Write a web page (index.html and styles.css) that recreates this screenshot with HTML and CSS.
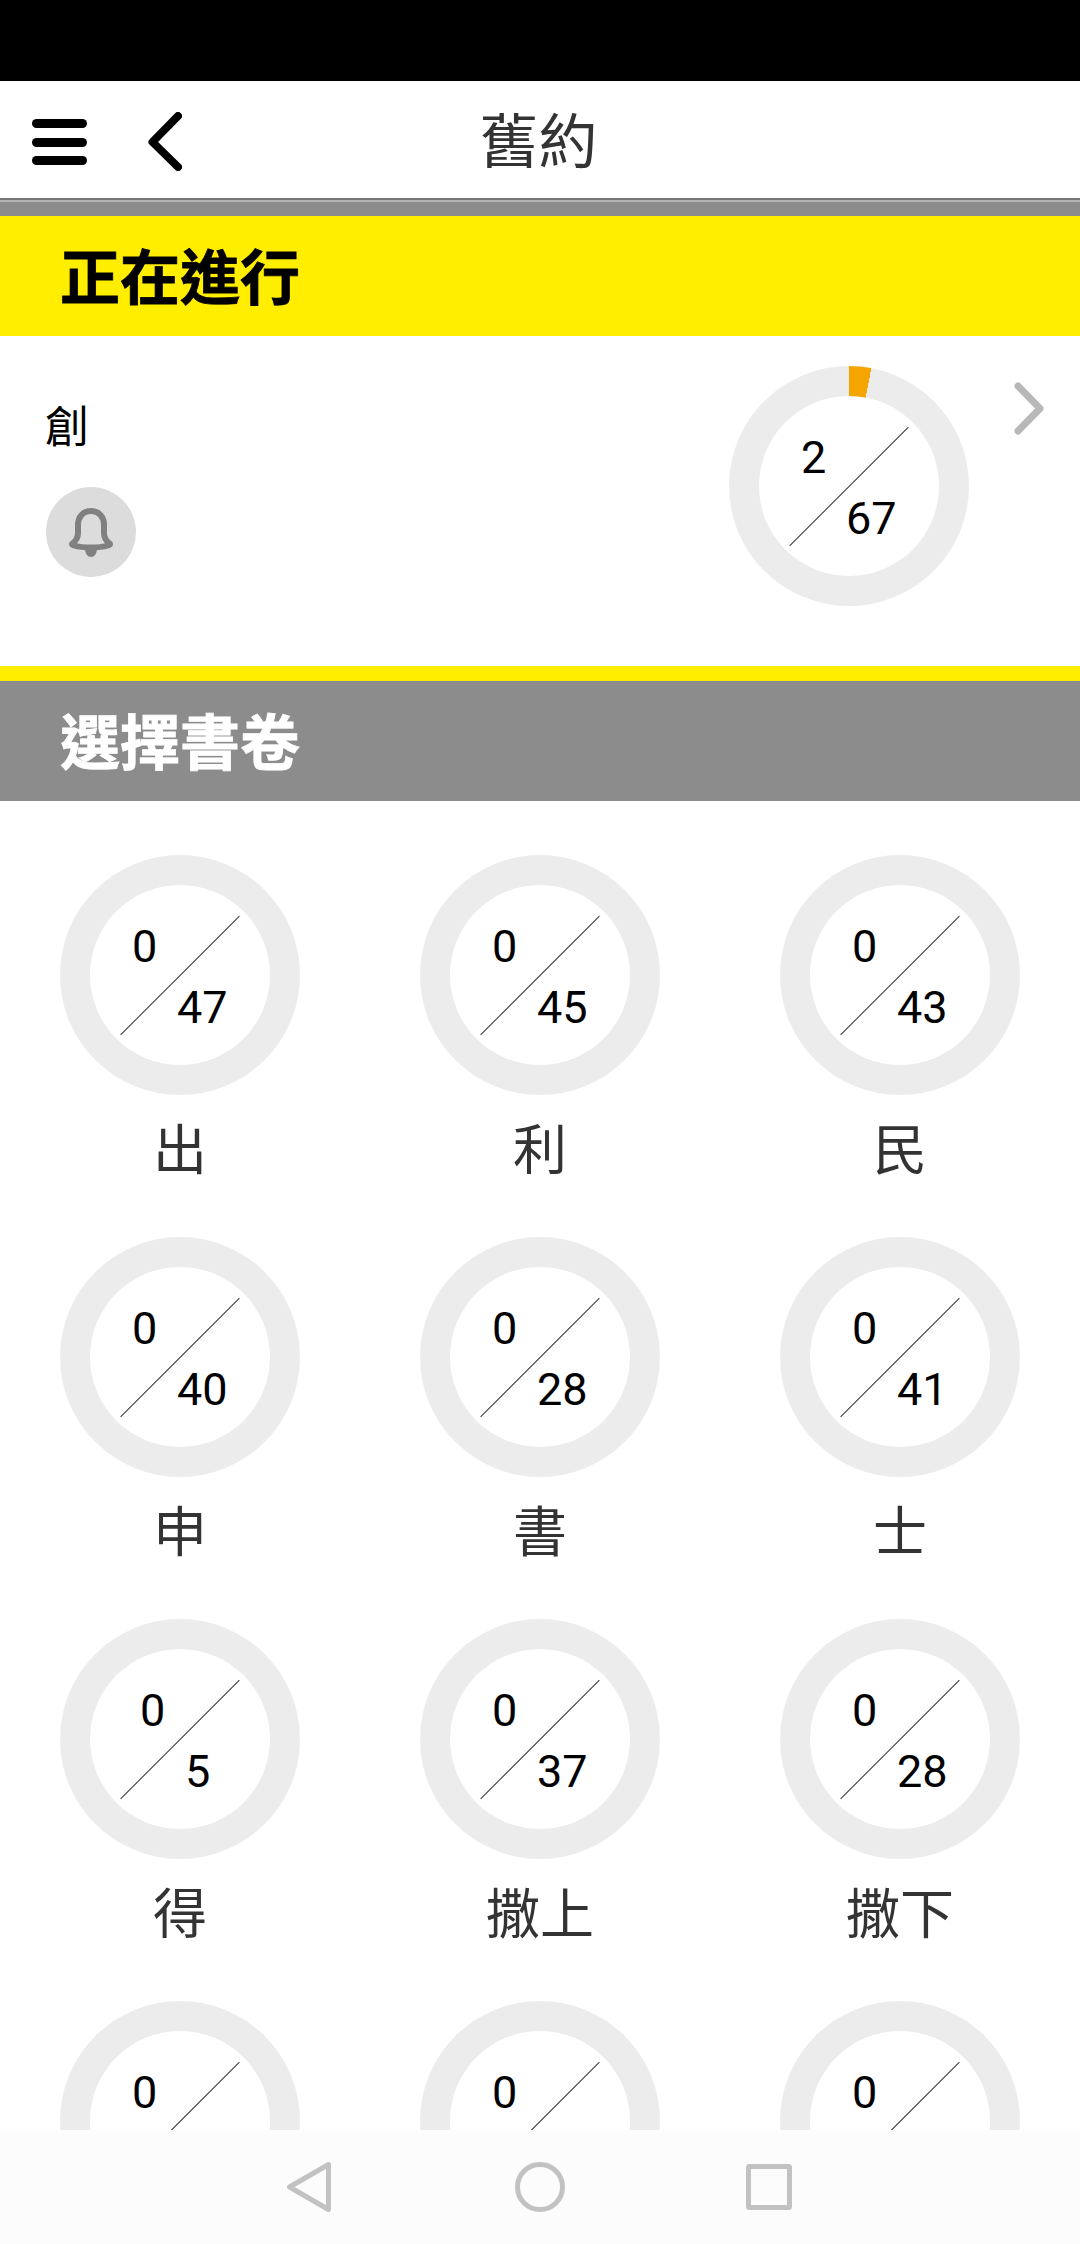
FILE: index.html
```html
<!DOCTYPE html>
<html lang="zh-Hant">
<head>
    <meta charset="UTF-8">
    <meta name="viewport" content="width=device-width, initial-scale=1.0">
    <title>舊約</title>
    <link rel="stylesheet" href="styles.css">
</head>
<body>
    <div class="status-bar"></div>

    <header class="app-bar">
        <div class="app-bar-left">
            <svg class="icon-menu" width="55" height="46" viewBox="0 0 55 46">
                <rect y="0" width="55" height="9" rx="4.5"/>
                <rect y="19" width="55" height="9" rx="4.5"/>
                <rect y="37" width="55" height="9" rx="4.5"/>
            </svg>
            <svg class="icon-back" width="34" height="59" viewBox="0 0 34 59">
                <polyline points="30,4 4.5,30 30,55"/>
            </svg>
        </div>
        <h1 class="app-title">舊約</h1>
    </header>
    <div class="app-bar-shadow"></div>

    <h2 class="section-head section-yellow">正在進行</h2>

    <section class="current">
        <div class="current-info">
            <p class="current-name">創</p>
            <div class="bell">
                <svg width="44" height="49" viewBox="0 0 44 49">
                    <path class="bell-body" d="M22 3C14 3 9 9 9 17v8c0 5-2 8-6 11 0 1 1 1 2 1.5 5 1.5 11 2 17 2s12-.5 17-2c1-.5 2-.5 2-1.5-4-3-6-6-6-11v-8c0-8-5-14-13-14z"/>
                    <path class="bell-clapper" d="M16 41h12a6 8 0 0 1-12 0z"/>
                </svg>
            </div>
        </div>
        <div class="ring" style="--p: 10.7deg">
            <div class="ring-inner">
                <div class="frac"><span class="num">2</span><span class="den">67</span></div>
            </div>
        </div>
        <svg class="icon-next" width="30" height="53" viewBox="0 0 30 53">
            <polyline points="4,4 26,26.5 4,49"/>
        </svg>
    </section>

    <div class="band"></div>
    <h2 class="section-head section-gray">選擇書卷</h2>

    <main class="books">
        <div class="book">
            <div class="ring"><div class="ring-inner"><div class="frac"><span class="num">0</span><span class="den">47</span></div></div></div>
            <p class="book-name">出</p>
        </div>
        <div class="book">
            <div class="ring"><div class="ring-inner"><div class="frac"><span class="num">0</span><span class="den">45</span></div></div></div>
            <p class="book-name">利</p>
        </div>
        <div class="book">
            <div class="ring"><div class="ring-inner"><div class="frac"><span class="num">0</span><span class="den">43</span></div></div></div>
            <p class="book-name">民</p>
        </div>
        <div class="book">
            <div class="ring"><div class="ring-inner"><div class="frac"><span class="num">0</span><span class="den">40</span></div></div></div>
            <p class="book-name">申</p>
        </div>
        <div class="book">
            <div class="ring"><div class="ring-inner"><div class="frac"><span class="num">0</span><span class="den">28</span></div></div></div>
            <p class="book-name">書</p>
        </div>
        <div class="book">
            <div class="ring"><div class="ring-inner"><div class="frac"><span class="num">0</span><span class="den">41</span></div></div></div>
            <p class="book-name">士</p>
        </div>
        <div class="book">
            <div class="ring"><div class="ring-inner"><div class="frac frac-short"><span class="num">0</span><span class="den">5</span></div></div></div>
            <p class="book-name">得</p>
        </div>
        <div class="book">
            <div class="ring"><div class="ring-inner"><div class="frac"><span class="num">0</span><span class="den">37</span></div></div></div>
            <p class="book-name">撒上</p>
        </div>
        <div class="book">
            <div class="ring"><div class="ring-inner"><div class="frac"><span class="num">0</span><span class="den">28</span></div></div></div>
            <p class="book-name">撒下</p>
        </div>
        <!-- last row runs under the nav bar, only the top of the rings shows -->
        <div class="book">
            <div class="ring"><div class="ring-inner"><div class="frac"><span class="num">0</span></div></div></div>
        </div>
        <div class="book">
            <div class="ring"><div class="ring-inner"><div class="frac"><span class="num">0</span></div></div></div>
        </div>
        <div class="book">
            <div class="ring"><div class="ring-inner"><div class="frac"><span class="num">0</span></div></div></div>
        </div>
    </main>

    <nav class="nav-bar">
        <svg width="50" height="50" viewBox="0 0 50 50">
            <path d="M43.5 2.5 4.5 25 43.5 47.5z"/>
        </svg>
        <svg width="50" height="50" viewBox="0 0 50 50">
            <circle cx="25" cy="25" r="22.5"/>
        </svg>
        <svg width="50" height="50" viewBox="0 0 50 50">
            <rect x="3.5" y="4.5" width="41" height="41" rx="1"/>
        </svg>
    </nav>
</body>
</html>
```

FILE: styles.css
```css
* {
    margin: 0;
    padding: 0;
    box-sizing: border-box;
    font-family: Roboto, 'Noto Sans CJK TC', sans-serif;
}

html, body {
    height: 2244px;
    overflow: hidden;
}

body {
    position: relative;
    background: #fff;
    color: #000;
}

.status-bar {
    height: 81px;
    background: #000;
}

/* Top bar */
.app-bar {
    position: relative;
    display: flex;
    align-items: center;
    justify-content: center;
    height: 119px;
    padding-top: 7px;
    border-bottom: 2px solid #777;
}

.app-bar-left {
    position: absolute;
    left: 32px;
    top: 31px;
    display: flex;
    align-items: center;
    gap: 61px;
}

.icon-menu rect {
    fill: #000;
}

.icon-back polyline {
    fill: none;
    stroke: #000;
    stroke-width: 8;
    stroke-linecap: round;
    stroke-linejoin: round;
}

.app-title {
    margin-left: -3px;
    font-size: 59px;
    line-height: 64px;
    font-weight: 400;
    color: #333;
}

.app-bar-shadow {
    height: 16px;
    background: #8c8c8c;
    border-top: 2px solid #b4b4b4;
}

/* Section headings */
.section-head {
    height: 120px;
    padding: 8px 0 0 60px;
    font-size: 60px;
    line-height: 112px;
    font-weight: 700;
    -webkit-text-stroke: 0.8px currentColor;
}

.section-yellow {
    background: #ffee00;
    color: #000;
}

.section-gray {
    background: #8c8c8c;
    color: #fff;
}

.band {
    height: 15px;
    background: #ffee00;
}

/* Current book */
.current {
    display: flex;
    align-items: flex-start;
    height: 330px;
    padding: 30px 36px 0 46px;
}

.current-info {
    flex: 1;
    padding-top: 40px;
}

.current-name {
    margin-left: -1px;
    font-size: 44px;
    line-height: 44px;
    margin-bottom: 37px;
}

.bell {
    display: flex;
    align-items: center;
    justify-content: center;
    width: 90px;
    height: 90px;
    border-radius: 50%;
    background: #dcdcdc;
}

.bell-body {
    fill: none;
    stroke: #808080;
    stroke-width: 6;
    stroke-linejoin: round;
}

.bell-clapper {
    fill: #808080;
}

.icon-next {
    margin: 16px 0 0 45px;
}

.icon-next polyline {
    fill: none;
    stroke: #b8b8b8;
    stroke-width: 7;
    stroke-linecap: round;
    stroke-linejoin: round;
}

/* Progress ring */
.ring {
    --p: 0deg;
    position: relative;
    display: flex;
    align-items: center;
    justify-content: center;
    width: 240px;
    height: 240px;
    border-radius: 50%;
    background: conic-gradient(#f5a500 var(--p), #ececec 0);
}

.ring-inner {
    display: flex;
    align-items: center;
    justify-content: center;
    width: 180px;
    height: 180px;
    border-radius: 50%;
    background: #fff;
}

.ring-inner::after {
    content: "";
    position: absolute;
    left: 36px;
    top: 120px;
    width: 168px;
    height: 1px;
    background: #333;
    transform: rotate(-45deg);
}

.frac {
    display: grid;
    grid-template-columns: 25px 51px;
    grid-template-rows: 61px 61px;
    column-gap: 20px;
    padding-top: 3px;
    font-size: 45px;
    line-height: 61px;
}

.frac-short {
    grid-template-columns: 25px 25px;
    margin-left: -10px;
}

.num {
    grid-column: 1;
    grid-row: 1;
}

.den {
    grid-column: 2;
    grid-row: 2;
}

/* Book grid */
.books {
    display: grid;
    grid-template-columns: repeat(3, 360px);
    row-gap: 58px;
    padding-top: 54px;
}

.book {
    display: flex;
    flex-direction: column;
    align-items: center;
}

.book-name {
    margin-top: 30px;
    font-size: 54px;
    line-height: 54px;
    color: #333;
}

/* Android nav bar */
.nav-bar {
    position: absolute;
    left: 0;
    right: 0;
    bottom: 0;
    display: flex;
    align-items: center;
    justify-content: center;
    gap: 180px;
    height: 114px;
    background: #fcfcfc;
}

.nav-bar path,
.nav-bar circle,
.nav-bar rect {
    fill: none;
    stroke: #c2c2c2;
    stroke-width: 5;
    stroke-linejoin: round;
}
```
